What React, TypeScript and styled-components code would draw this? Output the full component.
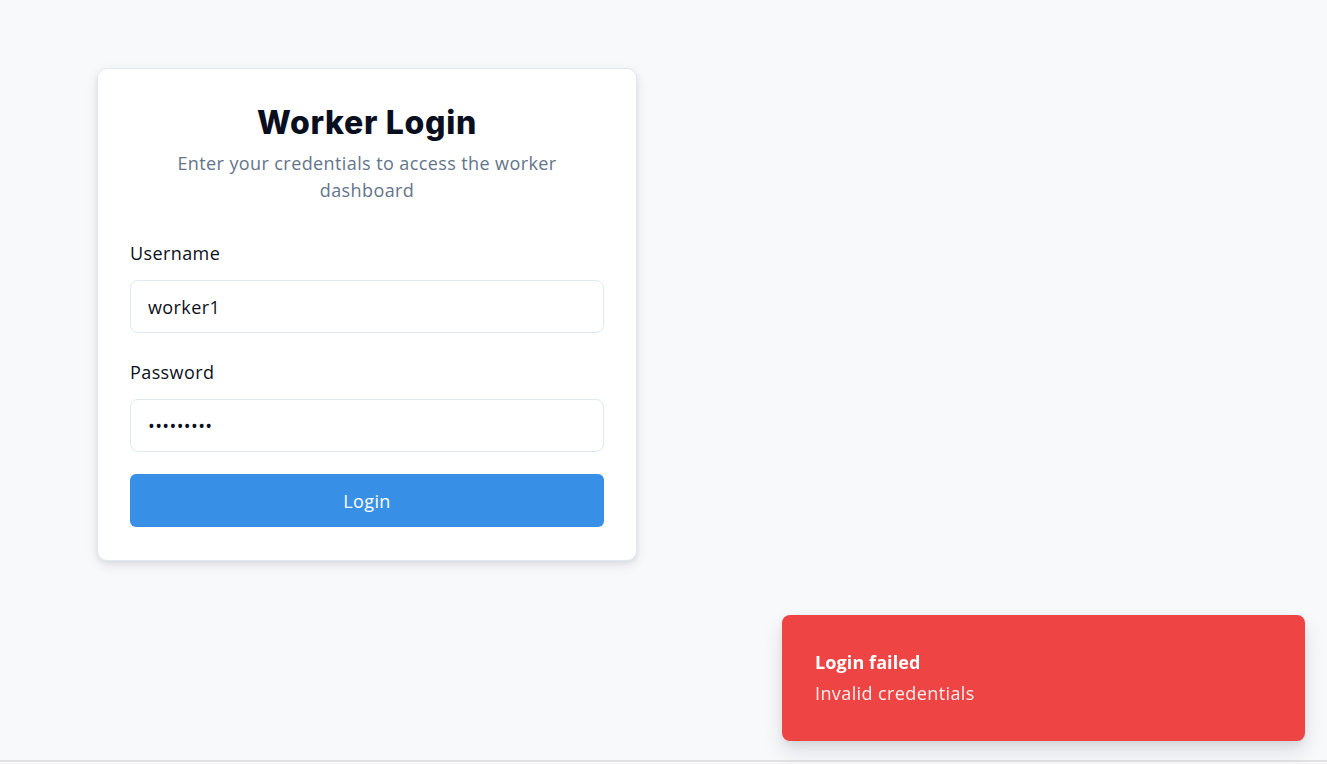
import React from "react";
import styled, { createGlobalStyle } from "styled-components";

const Global = createGlobalStyle`
  html, body { margin: 0; padding: 0; }
  body {
    background: #f8f9fb;
    font-family: "Open Sans", "Noto Sans", sans-serif;
    letter-spacing: 0.4px;
    color: #0b1020;
    min-height: 764px;
    overflow: hidden;
  }
`;

const Page = styled.div`
  min-height: 762px;
  box-sizing: border-box;
  padding: 68px 0 0 97px;
  border-bottom: 2px solid #e2e2e4;
`;

const Card = styled.div`
  width: 540px;
  box-sizing: border-box;
  background: #ffffff;
  border: 1px solid #e2e8f0;
  border-radius: 10px;
  box-shadow: 0 4px 12px rgba(15, 23, 42, 0.1), 0 2px 4px rgba(15, 23, 42, 0.05);
  padding: 33px 32px 33px;
  display: flex;
  flex-direction: column;
`;

const Header = styled.div`
  display: flex;
  flex-direction: column;
  align-items: center;
  text-align: center;
  gap: 6px;
  margin-bottom: 36px;
`;

const Title = styled.h1`
  margin: 0;
  font-family: "Inter", "Liberation Sans", sans-serif;
  font-weight: 800;
  font-size: 32px;
  letter-spacing: 0.7px;
  line-height: 42px;
  color: #0a0f1f;
`;

const Subtitle = styled.p`
  margin: 0;
  width: 420px;
  font-size: 18px;
  line-height: 27px;
  color: #64748b;
`;

const Form = styled.div`
  display: flex;
  flex-direction: column;
`;

const Field = styled.div<{ $gapAfter: number }>`
  display: flex;
  flex-direction: column;
  gap: 13px;
  margin-bottom: ${(p) => p.$gapAfter}px;
`;

const Label = styled.label`
  font-size: 18px;
  line-height: 27px;
  color: #0b1020;
`;

const Input = styled.input`
  box-sizing: border-box;
  height: 53px;
  width: 100%;
  padding: 0 17px;
  border: 1px solid #e2e8f0;
  border-radius: 8px;
  background: #fff;
  font-family: "Open Sans", "Noto Sans", sans-serif;
  letter-spacing: 0.4px;
  font-size: 18px;
  color: #0b1020;
  outline: none;
`;

const Button = styled.button`
  height: 53px;
  width: 100%;
  border: none;
  border-radius: 6px;
  background: #3890e6;
  color: #ffffff;
  font-family: "Open Sans", "Noto Sans", sans-serif;
  letter-spacing: 0.4px;
  font-size: 18px;
  cursor: pointer;
`;

const Toast = styled.div`
  position: fixed;
  right: 22px;
  bottom: 23px;
  width: 523px;
  height: 126px;
  box-sizing: border-box;
  padding: 33px 33px;
  background: #ef4444;
  border-radius: 8px;
  color: #ffffff;
  box-shadow: 0 10px 20px rgba(15, 23, 42, 0.12), 0 4px 8px rgba(15, 23, 42, 0.06);
  display: flex;
  flex-direction: column;
  justify-content: center;
  gap: 4px;
`;

const ToastTitle = styled.div`
  font-weight: 700;
  font-size: 18px;
  line-height: 27px;
  letter-spacing: 0.1px;
`;

const ToastText = styled.div`
  font-size: 18px;
  line-height: 27px;
  opacity: 0.92;
`;

export default function App() {
  return (
    <>
      <Global />
      <Page>
        <Card>
          <Header>
            <Title>Worker Login</Title>
            <Subtitle>Enter your credentials to access the worker dashboard</Subtitle>
          </Header>
          <Form>
            <Field $gapAfter={26}>
              <Label>Username</Label>
              <Input type="text" defaultValue="worker1" />
            </Field>
            <Field $gapAfter={22}>
              <Label>Password</Label>
              <Input type="password" defaultValue="password1" />
            </Field>
            <Button>Login</Button>
          </Form>
        </Card>
      </Page>
      <Toast>
        <ToastTitle>Login failed</ToastTitle>
        <ToastText>Invalid credentials</ToastText>
      </Toast>
    </>
  );
}
